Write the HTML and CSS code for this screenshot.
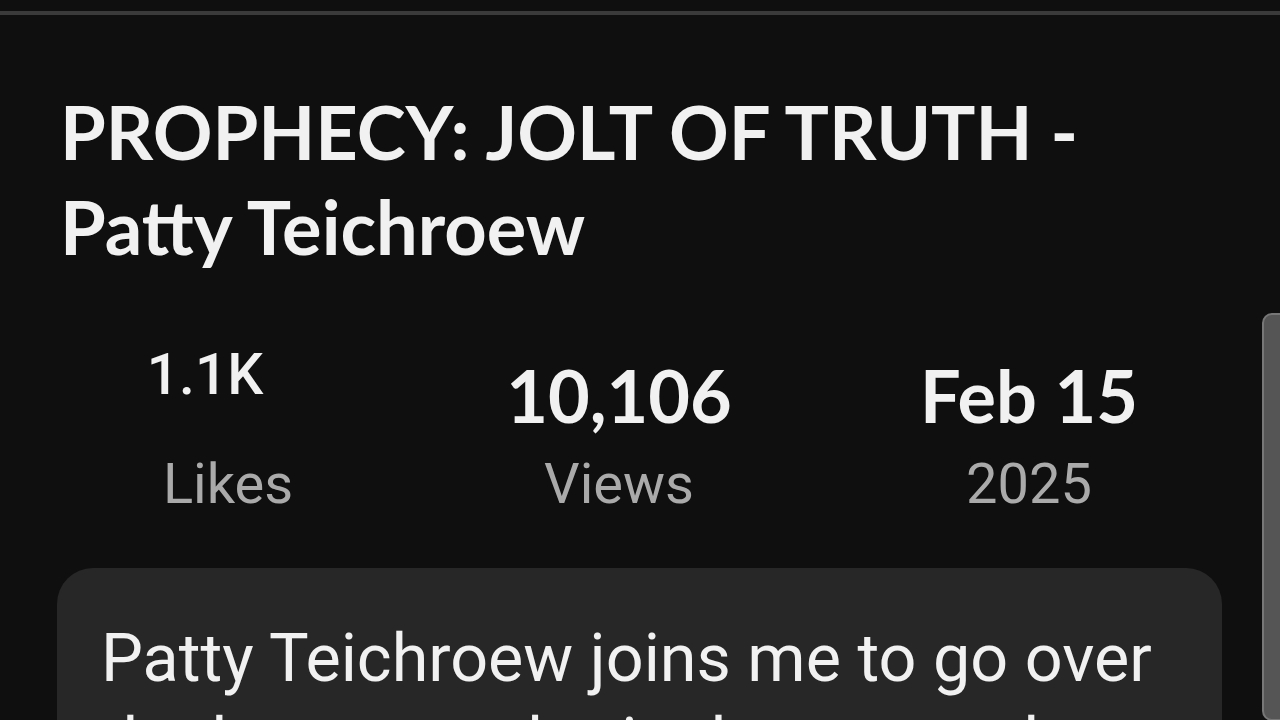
FILE: index.html
```html
<!DOCTYPE html>
<html lang="en">
<head>
  <meta charset="UTF-8">
  <meta name="viewport" content="width=device-width, initial-scale=1.0">
  <title>PROPHECY: JOLT OF TRUTH - Patty Teichroew</title>
  <link rel="stylesheet" href="styles.css">
</head>
<body>
  <div class="top-divider"></div>

  <main class="video-info">
    <h1 class="video-title">PROPHECY: JOLT OF TRUTH - Patty Teichroew</h1>

    <div class="stats">
      <div class="stat stat-likes">
        <span class="stat-value">1.1K</span>
        <span class="stat-label">Likes</span>
      </div>
      <div class="stat">
        <span class="stat-value">10,106</span>
        <span class="stat-label">Views</span>
      </div>
      <div class="stat">
        <span class="stat-value">Feb 15</span>
        <span class="stat-label">2025</span>
      </div>
    </div>

    <div class="description">
      <p>Patty Teichroew joins me to go over the latest prophetic dreams and words she has had</p>
    </div>
  </main>

  <div class="scroll-thumb"></div>
</body>
</html>
```

FILE: styles.css
```css
body {
  margin: 0;
  background: #0f0f0f;
  color: #f1f1f1;
  font-family: Roboto, "Liberation Sans", sans-serif;
  height: 100vh;
  overflow: hidden;
}

.top-divider {
  height: 11px;
  border-bottom: 4px solid #3a3a3a;
}

.video-info {
  padding: 0 58px 0 57px;
}

.video-title {
  margin: 69px 0 0 3px;
  font-family: Lato, "Open Sans", sans-serif;
  font-weight: 700;
  font-size: 74px;
  line-height: 95px;
}

.stats {
  display: grid;
  grid-template-columns: 336px 446px 374px;
  margin-top: 76px;
  margin-left: 3px;
}

.stat {
  display: flex;
  flex-direction: column;
  align-items: center;
}

.stat-value {
  font-family: Lato, "Open Sans", sans-serif;
  font-weight: 700;
  font-size: 72px;
  line-height: 90px;
}

.stat-label {
  font-size: 56px;
  line-height: 88px;
  color: #aaaaaa;
}

.stat-likes .stat-value {
  font-family: Roboto, "Liberation Sans", sans-serif;
  font-weight: 500;
  font-size: 57px;
  margin-right: 46px;
  line-height: 50px;
  margin-bottom: 40px;
}

.description {
  margin-top: 40px;
  background: #272727;
  border-radius: 36px;
  padding: 48px 44px 36px;
}

.description p {
  margin: 0;
  font-size: 66.5px;
  line-height: 84px;
}

.scroll-thumb {
  position: absolute;
  top: 313px;
  right: -10px;
  width: 24px;
  height: 404px;
  background: #555555;
  border: 2px solid #777777;
  border-radius: 10px;
}
```
